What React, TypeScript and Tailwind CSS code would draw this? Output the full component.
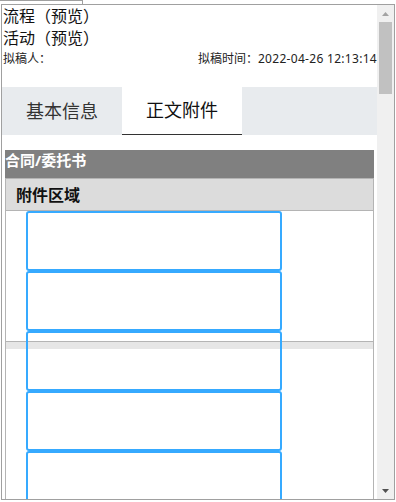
export default function App() {
  const boxes = [0, 1, 2, 3, 4];

  return (
    <div
      className="w-[396px] h-[502px] bg-white overflow-hidden"
      style={{ fontFamily: '"Noto Sans", "Noto Sans CJK SC", sans-serif' }}
    >
      {/* leftover edge of the box above */}
      <div className="h-[4px] w-[83px] border-t border-r border-[#a0a0a0]" />

      {/* window frame */}
      <div className="ml-[1px] w-[394px] h-[496px] border border-[#a0a0a0] flex overflow-hidden">
        {/* page content */}
        <div className="flex-1 min-w-0 flex flex-col overflow-hidden">
          <div className="pl-[1px] text-[16px] leading-[22px] text-[#111]">流程（预览）</div>
          <div className="pl-[1px] text-[16px] leading-[22px] text-[#111]">活动（预览）</div>
          <div className="mt-[1px] pl-[1px] flex justify-between text-[12px] leading-[18px] text-[#222]">
            <span>拟稿人：</span>
            <span>
              拟稿时间：<span className="tracking-[0.3px]">2022-04-26 12:13:14</span>
            </span>
          </div>

          {/* tabs */}
          <div className="mt-[19px] h-[48px] shrink-0 bg-[#e8ebee] flex">
            <div className="w-[120px] flex items-center justify-center text-[18px] text-[#333]">
              基本信息
            </div>
            <div className="w-[120px] flex items-center justify-center text-[18px] text-[#111] bg-white border-b border-[#333]">
              正文附件
            </div>
          </div>

          {/* section */}
          <div className="mt-[15px] mx-[3px] flex flex-col flex-1">
            <div className="h-[28px] shrink-0 bg-[#808080] text-white font-bold text-[15px] leading-[20px]">
              合同/委托书
            </div>
            <div className="h-[33px] shrink-0 border border-[#b4b4b4] bg-[#dcdcdc] flex items-center pl-[10px] text-[16px] font-bold text-[#111]">
              附件区域
            </div>
            <div className="h-[130px] shrink-0 border-x border-[#b4b4b4] pl-[20px]">
              {boxes.map((b) => (
                <div
                  key={b}
                  className="relative z-10 w-[256px] h-[60px] border-2 border-[#36aaff] rounded-[3px] bg-transparent"
                />
              ))}
            </div>
            <div className="h-[8px] shrink-0 border-t border-x border-[#b4b4b4] bg-[#e6e6e6]" />
            <div className="flex-1 border-x border-[#b4b4b4]" />
          </div>
        </div>

        {/* scrollbar */}
        <div className="w-[17px] shrink-0 bg-[#f0f0f0] flex flex-col items-center">
          <div className="h-[17px] w-full flex items-center justify-center">
            <svg width="7" height="4" viewBox="0 0 7 4">
              <polygon points="0,4 7,4 3.5,0" fill="#a3a3a3" />
            </svg>
          </div>
          <div className="w-[13px] h-[72px] bg-[#c1c1c1]" />
          <div className="flex-1" />
          <div className="h-[17px] w-full flex items-center justify-center">
            <svg width="7" height="4" viewBox="0 0 7 4">
              <polygon points="0,0 7,0 3.5,4" fill="#505050" />
            </svg>
          </div>
        </div>
      </div>
    </div>
  );
}
